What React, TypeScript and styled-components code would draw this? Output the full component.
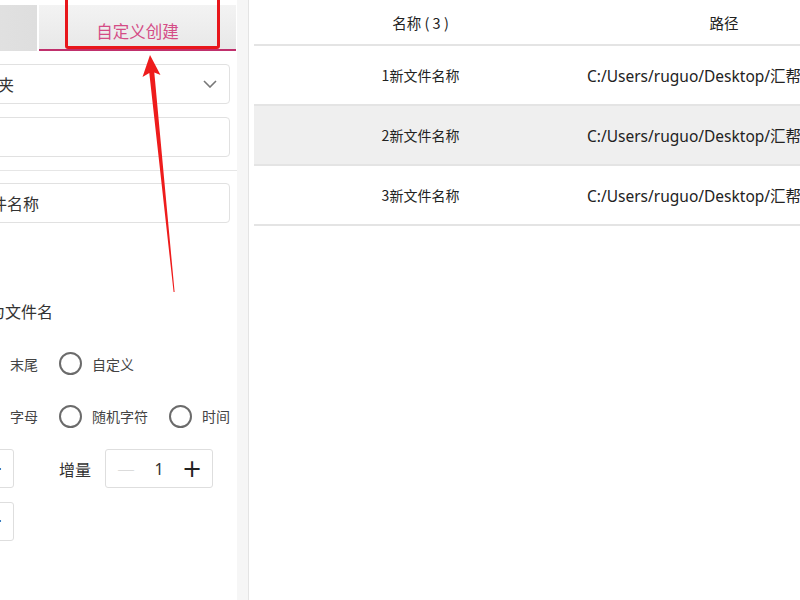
import React from "react";
import styled, { createGlobalStyle } from "styled-components";

const GlobalStyle = createGlobalStyle`
  html, body { margin: 0; padding: 0; background: #fff; }
  body {
    font-family: "Noto Sans", "Noto Sans CJK SC", sans-serif;
    color: #333;
    overflow: hidden;
  }
  * { box-sizing: border-box; }
`;

const Screen = styled.div`
  position: relative;
  display: flex;
  width: 800px;
  height: 600px;
  overflow: hidden;
  background: #fff;
`;

// left settings panel (its left part is scrolled out of view)
const Side = styled.aside`
  flex: 0 0 377px;
  width: 377px;
  min-width: 0;
  overflow: hidden;
  margin-left: -140px;
  padding-top: 5px;
  display: flex;
  flex-direction: column;
  font-family: "Noto Sans CJK SC", sans-serif;
`;

const Tabs = styled.div`
  display: flex;
  gap: 2px;
  padding-right: 1px;
  height: 46px;
`;

const Tab = styled.div<{ $active?: boolean }>`
  flex: ${(p) => (p.$active ? "0 0 197px" : "1")};
  min-width: 0;
  display: flex;
  align-items: center;
  justify-content: center;
  padding-top: 8px;
  font-size: 16.5px;
  color: ${(p) => (p.$active ? "#d44c86" : "#555")};
  background: ${(p) =>
    p.$active
      ? "linear-gradient(#f3f3f3, #e8e8e8)"
      : "linear-gradient(to right, #e9e9e9, #dedede)"};
  border-bottom: 2px solid ${(p) => (p.$active ? "#c0306c" : "transparent")};
`;

const Form = styled.div`
  display: flex;
  flex-direction: column;
  padding: 13px 7px 0 0;
`;

const Field = styled.div<{ $gap?: number; $pad?: number }>`
  height: 40px;
  display: flex;
  align-items: center;
  justify-content: space-between;
  padding: 0 12px 0 ${(p) => p.$pad ?? 12}px;
  border: 1px solid #e1e1e1;
  border-radius: 4px;
  font-size: 16px;
  color: #333;
  white-space: nowrap;
  margin-bottom: ${(p) => p.$gap ?? 13}px;
`;

const Divider = styled.div`
  height: 1px;
  background: #e6e6e6;
  margin: 0 -7px 12px 0;
`;

const Options = styled.div`
  display: flex;
  flex-direction: column;
  gap: 12.5px;
  margin-top: 68px;
`;

const OptionTitle = styled.div`
  height: 40px;
  display: flex;
  align-items: center;
  padding-left: 1px;
  font-size: 16px;
  color: #333;
  white-space: nowrap;
`;

const RadioRow = styled.div`
  height: 40px;
  display: flex;
  align-items: center;
  padding-left: 35px;
`;

const RadioItem = styled.label`
  display: flex;
  align-items: center;
  gap: 10px;
  margin-right: 21px;
  font-size: 14px;
  color: #444;
  white-space: nowrap;
  flex-shrink: 0;
`;

const Radio = styled.span`
  width: 23px;
  height: 23px;
  border-radius: 50%;
  border: 2px solid #6b6b6b;
  flex-shrink: 0;
`;

const StepRow = styled.div`
  height: 40px;
  display: flex;
  align-items: center;
`;

const StepLabel = styled.span<{ $offset?: number }>`
  font-size: 16px;
  color: #333;
  margin-left: ${(p) => p.$offset ?? 0}px;
  margin-right: 14px;
  white-space: nowrap;
  flex-shrink: 0;
`;

const Stepper = styled.div`
  width: 108px;
  height: 39px;
  flex-shrink: 0;
  display: grid;
  grid-template-columns: 40px 1fr 40px;
  align-items: center;
  justify-items: center;
  border: 1px solid #dedede;
  border-radius: 3px;
  background: #fff;
`;

const StepBtn = styled.span<{ $dim?: boolean }>`
  font-family: "DejaVu Sans", sans-serif;
  font-size: ${(p) => (p.$dim ? 18 : 24)}px;
  font-weight: ${(p) => (p.$dim ? 300 : 400)};
  line-height: 1;
  color: ${(p) => (p.$dim ? "#c4c4c4" : "#222")};
`;

const StepValue = styled.span`
  font-family: "Noto Sans", sans-serif;
  font-size: 16px;
  color: #333;
`;

const Gutter = styled.div`
  flex: 0 0 12px;
  background: #f6f6f6;
  border-right: 1px solid #e4e4e4;
`;

const Main = styled.main`
  flex: 1;
  min-width: 0;
  overflow: hidden;
  padding-left: 5px;
`;

const Table = styled.div`
  width: 720px;
  font-family: "Noto Sans CJK SC", sans-serif;
  font-size: 14px;
  color: #222;
`;

const Row = styled.div<{ $head?: boolean; $shade?: boolean }>`
  display: grid;
  grid-template-columns: 333px 274px 1fr;
  height: ${(p) => (p.$head ? 46 : 60)}px;
  border-bottom: 2px solid #e4e4e4;
  background: ${(p) => (p.$shade ? "#efefef" : "#fff")};
`;

const Cell = styled.div<{ $path?: boolean; $head?: boolean }>`
  display: flex;
  align-items: center;
  justify-content: ${(p) => (p.$path ? "flex-start" : "center")};
  white-space: nowrap;
  font-size: ${(p) => (p.$path ? 15.5 : p.$head ? 14.5 : 14)}px;
  font-family: ${(p) =>
    p.$path ? `"Noto Sans", "Noto Sans CJK SC", sans-serif` : "inherit"};
`;

// red annotation box + arrow drawn on top of the screenshot
const MarkBox = styled.div`
  position: absolute;
  left: 65px;
  top: -3px;
  width: 155px;
  height: 52px;
  border: 3px solid #e8161b;
  border-radius: 3px;
  pointer-events: none;
`;

const Overlay = styled.svg`
  position: absolute;
  left: 0;
  top: 0;
  pointer-events: none;
`;

const Chevron = () => (
  <svg width="14" height="8" viewBox="0 0 14 8">
    <path d="M1 1l6 6 6-6" fill="none" stroke="#777" strokeWidth="1.6" />
  </svg>
);

const files = [1, 2, 3];

export default function App() {
  return (
    <>
      <GlobalStyle />
      <Screen>
        <Side>
          <Tabs>
            <Tab>批量创建</Tab>
            <Tab $active>自定义创建</Tab>
          </Tabs>
          <Form>
            <Field $pad={9}>
              <span>创建到指定的文件夹</span>
              <Chevron />
            </Field>
            <Field />
            <Divider />
            <Field $gap={0} $pad={18}>请输入新建的文件名称</Field>
            <Options>
              <OptionTitle>使用自定义内容作为文件名</OptionTitle>
              <RadioRow>
                <RadioItem><Radio />开头</RadioItem>
                <RadioItem><Radio />末尾</RadioItem>
                <RadioItem><Radio />自定义</RadioItem>
              </RadioRow>
              <RadioRow>
                <RadioItem><Radio />数字</RadioItem>
                <RadioItem><Radio />字母</RadioItem>
                <RadioItem><Radio />随机字符</RadioItem>
                <RadioItem><Radio />时间</RadioItem>
              </RadioRow>
              <StepRow>
                <StepLabel>起始</StepLabel>
                <Stepper>
                  <StepBtn $dim>—</StepBtn>
                  <StepValue>1</StepValue>
                  <StepBtn>+</StepBtn>
                </Stepper>
                <StepLabel $offset={45}>增量</StepLabel>
                <Stepper>
                  <StepBtn $dim>—</StepBtn>
                  <StepValue>1</StepValue>
                  <StepBtn>+</StepBtn>
                </Stepper>
              </StepRow>
              <StepRow>
                <StepLabel>位数</StepLabel>
                <Stepper>
                  <StepBtn $dim>—</StepBtn>
                  <StepValue>1</StepValue>
                  <StepBtn>+</StepBtn>
                </Stepper>
              </StepRow>
            </Options>
          </Form>
        </Side>
        <Gutter />
        <Main>
          <Table>
            <Row $head>
              <Cell $head>名称 ( 3 )</Cell>
              <Cell $head>路径</Cell>
              <Cell />
            </Row>
            {files.map((n) => (
              <Row key={n} $shade={n === 2}>
                <Cell>{n}新文件名称</Cell>
                <Cell $path>C:/Users/ruguo/Desktop/汇帮文件批量创建/{n}新文件名称</Cell>
                <Cell />
              </Row>
            ))}
          </Table>
        </Main>

        <MarkBox />
        <Overlay width="800" height="600" viewBox="0 0 800 600">
          <polygon
            points="150,55 160.5,75 154.3,72.5 174.6,292 173.6,292 149.3,73 142.5,77"
            fill="#ee1c1c"
          />
        </Overlay>
      </Screen>
    </>
  );
}
